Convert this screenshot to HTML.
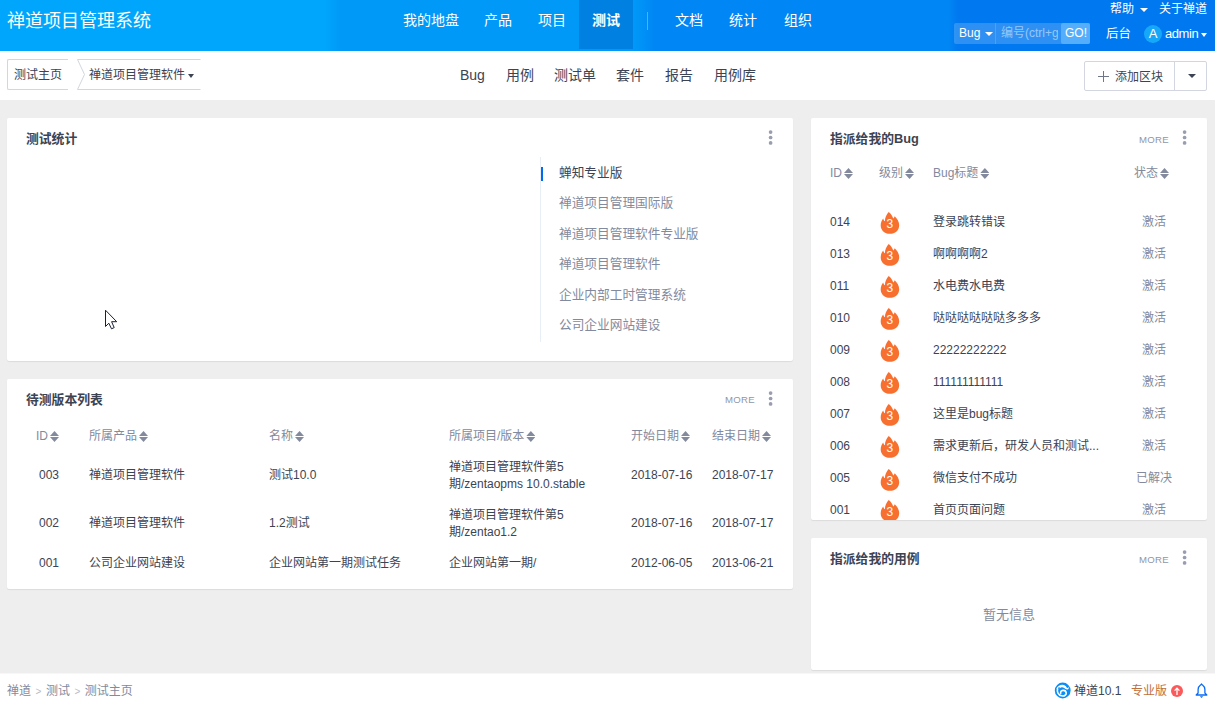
<!DOCTYPE html>
<html lang="zh-CN">
<head>
<meta charset="utf-8">
<title>测试主页 - 禅道项目管理系统</title>
<style>
*{box-sizing:border-box;margin:0;padding:0}
html,body{width:1215px;height:702px;overflow:hidden}
body{position:relative;background:#eeeeee;font-family:"Liberation Sans","Noto Sans CJK SC",sans-serif;font-size:12px;color:#3c4353;line-height:1}
.abs{position:absolute;white-space:nowrap}
#header{position:absolute;left:0;top:0;width:1215px;height:51px;background:linear-gradient(90deg,#00a6fb 0,#00a6fb 325px,#0099f8 340px,#0099f8 634px,#0087f5 654px,#0087f5 948px,#0078f0 958px,#0078f0 100%)}
#header .t{position:absolute;white-space:nowrap;color:#fff}
#title{left:7px;top:11px;font-size:18px;line-height:20px}
.nav{font-size:14px;line-height:20px;top:10px}
#act{position:absolute;left:579px;top:0;width:54px;height:49px;background:rgba(0,60,160,.25)}
#divd{position:absolute;left:647px;top:12px;width:1px;height:18px;background:rgba(255,255,255,.32)}
.sm{font-size:12px;line-height:16px}
.caret{display:inline-block;width:0;height:0;border-left:4px solid transparent;border-right:4px solid transparent;border-top:4px solid currentColor;vertical-align:middle}
#subbar{position:absolute;left:0;top:51px;width:1215px;height:49px;background:#fff}
.sub{font-size:14px;line-height:20px;top:65px;color:#3c4353}
.panel{position:absolute;background:#fff;border-radius:2px;box-shadow:0 1px 1px rgba(0,0,0,.08)}
.ptitle{font-weight:bold;font-size:12.8px;line-height:18px;color:#3c4353}
.more{font-size:9.600px;line-height:12px;color:#9096a8;letter-spacing:.25px}
.kebab{position:absolute;width:4px}
.kebab i{display:block;width:3.700px;height:3.700px;border-radius:50%;background:#989db0;margin-bottom:1.750px}
.th{color:#838a9d;font-size:12px;line-height:16px}
.td{color:#3c4353;font-size:12px;line-height:16px}
.sort{display:inline-block;position:relative;width:9px;height:11px;margin-left:2px;vertical-align:-2px}
.sort:before,.sort:after{content:"";position:absolute;left:0;width:9px;height:5px;background:#838a9d}
.sort:before{top:0;clip-path:polygon(50% 0,100% 100%,0 100%)}
.sort:after{top:6px;clip-path:polygon(0 0,100% 0,50% 100%)}
.li{font-size:12.7px;line-height:18px;color:#838a9d}
#footer{position:absolute;left:0;top:673px;width:1215px;height:29px;background:#fff;border-top:1px solid #f3f8fc}
</style>
</head>
<body>
<div id="header">
  <div class="t" id="title">禅道项目管理系统</div>
  <div id="act"></div>
  <div class="t nav" style="left:403px">我的地盘</div>
  <div class="t nav" style="left:484px">产品</div>
  <div class="t nav" style="left:538px">项目</div>
  <div class="t nav" style="left:592px;font-weight:bold">测试</div>
  <div id="divd"></div>
  <div class="t nav" style="left:675px">文档</div>
  <div class="t nav" style="left:729px">统计</div>
  <div class="t nav" style="left:784px">组织</div>
  <div class="t sm" style="left:1110px;top:1px;line-height:16px">帮助 <span class="caret" style="margin-left:3px"></span></div>
  <div class="t sm" style="left:1159px;top:1px;line-height:16px">关于禅道</div>
  <div style="position:absolute;left:954px;top:23px;width:136px;height:21px;border-radius:2px;background:rgba(255,255,255,.18)"></div>
  <div style="position:absolute;left:995px;top:23px;width:1px;height:21px;background:rgba(255,255,255,.15)"></div>
  <div style="position:absolute;left:1061px;top:23px;width:29px;height:21px;border-radius:2px;background:#55aefc"></div>
  <div class="t sm" style="left:959px;top:25px">Bug <span class="caret" style="margin-left:1px"></span></div>
  <div class="t sm" style="left:1001px;top:25px;color:rgba(255,255,255,.5);width:57px;overflow:hidden">编号(ctrl+g)</div>
  <div class="t sm" style="left:1065px;top:25px">GO!</div>
  <div class="t" style="left:1106px;top:25px;font-size:12.500px;line-height:18px">后台</div>
  <div style="position:absolute;left:1144px;top:25px;width:18px;height:18px;border-radius:50%;background:#16a8f8"></div>
  <div class="t" style="left:1144px;top:25px;width:18px;text-align:center;font-size:13px;line-height:18px">A</div>
  <div class="t" style="left:1165px;top:25px;font-size:13px;line-height:18px;letter-spacing:-.45px">admin<span class="caret" style="margin-left:3px;border-left-width:3px;border-right-width:3px"></span></div>
</div>
<div id="subbar"></div>
<div style="position:absolute;left:7px;top:59px;width:61px;height:31px;border:1px solid #d3d6e1;border-right:0;border-radius:2px 0 0 2px"></div>
<div class="abs" style="left:14px;top:67px;font-size:12px;line-height:16px">测试主页</div>
<svg style="position:absolute;left:76px;top:59px" width="126" height="31" viewBox="0 0 126 31"><path d="M124.500 0.500H1.500L8.500 15.500L1.500 30.500H124.500" fill="none" stroke="#d3d6e1" stroke-width="1"/></svg>
<div class="abs" style="left:89px;top:67px;font-size:12px;line-height:16px">禅道项目管理软件 <span class="caret" style="border-left-width:3.500px;border-right-width:3.500px;border-top-width:4px;margin-left:0px"></span></div>
<div class="abs sub" style="left:460px">Bug</div>
<div class="abs sub" style="left:506px">用例</div>
<div class="abs sub" style="left:554px">测试单</div>
<div class="abs sub" style="left:616px">套件</div>
<div class="abs sub" style="left:665px">报告</div>
<div class="abs sub" style="left:714px">用例库</div>
<div style="position:absolute;left:1084px;top:61px;width:123px;height:30px;border:1px solid #d3d6e1;border-radius:2px"></div>
<div style="position:absolute;left:1174px;top:61px;width:1px;height:30px;background:#d3d6e1"></div>
<svg style="position:absolute;left:1098px;top:71px" width="11" height="11" viewBox="0 0 11 11"><path d="M5.500 0V11M0 5.500H11" stroke="#70768a" stroke-width="1" fill="none"/></svg>
<div class="abs" style="left:1115px;top:69px;font-size:12px;line-height:16px">添加区块</div>
<div class="abs" style="left:1188px;top:74px;width:0;height:0;border-left:4px solid transparent;border-right:4px solid transparent;border-top:4px solid #3c4353"></div>
<div class="panel" style="left:7px;top:118px;width:786px;height:243px"></div>
<div class="abs ptitle" style="left:26px;top:130px">测试统计</div>
<svg style="position:absolute;left:767px;top:130px" width="9" height="17" viewBox="0 0 9 17"><circle cx="3.60" cy="2.05" r="1.850" fill="#989db0"/><circle cx="3.60" cy="7.50" r="1.850" fill="#989db0"/><circle cx="3.60" cy="12.95" r="1.850" fill="#989db0"/></svg>
<div style="position:absolute;left:540px;top:157px;width:1px;height:185px;background:#e8eef6"></div>
<div style="position:absolute;left:541px;top:167px;width:2px;height:14px;background:#006af1"></div>
<div class="abs li" style="left:559px;top:164px;color:#3c4353">蝉知专业版</div>
<div class="abs li" style="left:559px;top:194px">禅道项目管理国际版</div>
<div class="abs li" style="left:559px;top:225px">禅道项目管理软件专业版</div>
<div class="abs li" style="left:559px;top:255px">禅道项目管理软件</div>
<div class="abs li" style="left:559px;top:286px">企业内部工时管理系统</div>
<div class="abs li" style="left:559px;top:316px">公司企业网站建设</div>
<svg style="position:absolute;left:104px;top:309px" width="15" height="22" viewBox="0 0 15 22"><path d="M1.500 1.200V17.500L4.800 14.200L7.500 19.800L10.200 18.600L7.600 12.700H12.700Z" fill="#fff" stroke="#1a1f36" stroke-width="1" stroke-linejoin="miter"/></svg>
<div class="panel" style="left:7px;top:379px;width:786px;height:210px"></div>
<div class="abs ptitle" style="left:26px;top:391px">待测版本列表</div>
<div class="abs more" style="left:725px;top:394px">MORE</div>
<svg style="position:absolute;left:767px;top:391px" width="9" height="17" viewBox="0 0 9 17"><circle cx="3.60" cy="2.05" r="1.850" fill="#989db0"/><circle cx="3.60" cy="7.50" r="1.850" fill="#989db0"/><circle cx="3.60" cy="12.95" r="1.850" fill="#989db0"/></svg>
<div class="abs th" style="left:36px;top:428px">ID<span class="sort"></span></div>
<div class="abs th" style="left:89px;top:428px">所属产品<span class="sort"></span></div>
<div class="abs th" style="left:269px;top:428px">名称<span class="sort"></span></div>
<div class="abs th" style="left:449px;top:428px">所属项目/版本<span class="sort"></span></div>
<div class="abs th" style="left:631px;top:428px">开始日期<span class="sort"></span></div>
<div class="abs th" style="left:712px;top:428px">结束日期<span class="sort"></span></div>

<div class="abs td" style="left:39px;top:467px">003</div>
<div class="abs td" style="left:89px;top:467px">禅道项目管理软件</div>
<div class="abs td" style="left:269px;top:467px">测试10.0</div>
<div class="abs td" style="left:449px;top:459px;line-height:17px">禅道项目管理软件第5<br>期/zentaopms 10.0.stable</div>
<div class="abs td" style="left:631px;top:467px">2018-07-16</div>
<div class="abs td" style="left:712px;top:467px">2018-07-17</div>

<div class="abs td" style="left:39px;top:515px">002</div>
<div class="abs td" style="left:89px;top:515px">禅道项目管理软件</div>
<div class="abs td" style="left:269px;top:515px">1.2测试</div>
<div class="abs td" style="left:449px;top:507px;line-height:17px">禅道项目管理软件第5<br>期/zentao1.2</div>
<div class="abs td" style="left:631px;top:515px">2018-07-16</div>
<div class="abs td" style="left:712px;top:515px">2018-07-17</div>

<div class="abs td" style="left:39px;top:555px">001</div>
<div class="abs td" style="left:89px;top:555px">公司企业网站建设</div>
<div class="abs td" style="left:269px;top:555px">企业网站第一期测试任务</div>
<div class="abs td" style="left:449px;top:555px">企业网站第一期/</div>
<div class="abs td" style="left:631px;top:555px">2012-06-05</div>
<div class="abs td" style="left:712px;top:555px">2013-06-21</div>
<div class="panel" style="left:811px;top:118px;width:396px;height:402px"></div>
<div style="position:absolute;left:811px;top:118px;width:396px;height:402px;overflow:hidden">
<div style="position:absolute;left:-811px;top:-118px;width:1215px;height:702px">
<div class="abs ptitle" style="left:830px;top:130px">指派给我的Bug</div>
<div class="abs more" style="left:1139px;top:134px">MORE</div>
<svg style="position:absolute;left:1181px;top:130px" width="9" height="17" viewBox="0 0 9 17"><circle cx="3.60" cy="2.05" r="1.850" fill="#989db0"/><circle cx="3.60" cy="7.50" r="1.850" fill="#989db0"/><circle cx="3.60" cy="12.95" r="1.850" fill="#989db0"/></svg>
<div class="abs th" style="left:830px;top:165px">ID<span class="sort"></span></div>
<div class="abs th" style="left:879px;top:165px">级别<span class="sort"></span></div>
<div class="abs th" style="left:933px;top:165px">Bug标题<span class="sort"></span></div>
<div class="abs th" style="left:1134px;top:165px">状态<span class="sort"></span></div>
<div class="abs td" style="left:830px;top:214px">014</div>
<svg style="position:absolute;left:880px;top:212px" width="20" height="22" viewBox="0 0 20 22"><path d="M8.700 0C10.800 1.600 12.600 4 13.200 6.600C13.900 6 14.400 5.300 14.700 4.300C17.200 6.600 19.200 9.800 19.200 13.200C19.200 18.200 15.200 21.800 9.900 21.800C4.600 21.800 0.700 18.200 0.700 13.400C0.700 10.800 1.600 8.400 3.200 6.500C3.400 7.600 3.900 8.500 4.900 9.200C5 5.600 6.400 2.400 8.700 0Z" fill="#f8702f"/><text x="9.800" y="16.300" text-anchor="middle" font-family="Liberation Sans, sans-serif" font-size="12" fill="#fff">3</text></svg>
<div class="abs td" style="left:933px;top:214px">登录跳转错误</div>
<div class="abs td" style="left:1124px;top:214px;width:60px;text-align:center;color:#838a9d">激活</div>
<div class="abs td" style="left:830px;top:246px">013</div>
<svg style="position:absolute;left:880px;top:244px" width="20" height="22" viewBox="0 0 20 22"><path d="M8.700 0C10.800 1.600 12.600 4 13.200 6.600C13.900 6 14.400 5.300 14.700 4.300C17.200 6.600 19.200 9.800 19.200 13.200C19.200 18.200 15.200 21.800 9.900 21.800C4.600 21.800 0.700 18.200 0.700 13.400C0.700 10.800 1.600 8.400 3.200 6.500C3.400 7.600 3.900 8.500 4.900 9.200C5 5.600 6.400 2.400 8.700 0Z" fill="#f8702f"/><text x="9.800" y="16.300" text-anchor="middle" font-family="Liberation Sans, sans-serif" font-size="12" fill="#fff">3</text></svg>
<div class="abs td" style="left:933px;top:246px">啊啊啊啊2</div>
<div class="abs td" style="left:1124px;top:246px;width:60px;text-align:center;color:#838a9d">激活</div>
<div class="abs td" style="left:830px;top:278px">011</div>
<svg style="position:absolute;left:880px;top:276px" width="20" height="22" viewBox="0 0 20 22"><path d="M8.700 0C10.800 1.600 12.600 4 13.200 6.600C13.900 6 14.400 5.300 14.700 4.300C17.200 6.600 19.200 9.800 19.200 13.200C19.200 18.200 15.200 21.800 9.900 21.800C4.600 21.800 0.700 18.200 0.700 13.400C0.700 10.800 1.600 8.400 3.200 6.500C3.400 7.600 3.900 8.500 4.900 9.200C5 5.600 6.400 2.400 8.700 0Z" fill="#f8702f"/><text x="9.800" y="16.300" text-anchor="middle" font-family="Liberation Sans, sans-serif" font-size="12" fill="#fff">3</text></svg>
<div class="abs td" style="left:933px;top:278px">水电费水电费</div>
<div class="abs td" style="left:1124px;top:278px;width:60px;text-align:center;color:#838a9d">激活</div>
<div class="abs td" style="left:830px;top:310px">010</div>
<svg style="position:absolute;left:880px;top:308px" width="20" height="22" viewBox="0 0 20 22"><path d="M8.700 0C10.800 1.600 12.600 4 13.200 6.600C13.900 6 14.400 5.300 14.700 4.300C17.200 6.600 19.200 9.800 19.200 13.200C19.200 18.200 15.200 21.800 9.900 21.800C4.600 21.800 0.700 18.200 0.700 13.400C0.700 10.800 1.600 8.400 3.200 6.500C3.400 7.600 3.900 8.500 4.900 9.200C5 5.600 6.400 2.400 8.700 0Z" fill="#f8702f"/><text x="9.800" y="16.300" text-anchor="middle" font-family="Liberation Sans, sans-serif" font-size="12" fill="#fff">3</text></svg>
<div class="abs td" style="left:933px;top:310px">哒哒哒哒哒哒多多多</div>
<div class="abs td" style="left:1124px;top:310px;width:60px;text-align:center;color:#838a9d">激活</div>
<div class="abs td" style="left:830px;top:342px">009</div>
<svg style="position:absolute;left:880px;top:340px" width="20" height="22" viewBox="0 0 20 22"><path d="M8.700 0C10.800 1.600 12.600 4 13.200 6.600C13.900 6 14.400 5.300 14.700 4.300C17.200 6.600 19.200 9.800 19.200 13.200C19.200 18.200 15.200 21.800 9.900 21.800C4.600 21.800 0.700 18.200 0.700 13.400C0.700 10.800 1.600 8.400 3.200 6.500C3.400 7.600 3.900 8.500 4.900 9.200C5 5.600 6.400 2.400 8.700 0Z" fill="#f8702f"/><text x="9.800" y="16.300" text-anchor="middle" font-family="Liberation Sans, sans-serif" font-size="12" fill="#fff">3</text></svg>
<div class="abs td" style="left:933px;top:342px">22222222222</div>
<div class="abs td" style="left:1124px;top:342px;width:60px;text-align:center;color:#838a9d">激活</div>
<div class="abs td" style="left:830px;top:374px">008</div>
<svg style="position:absolute;left:880px;top:372px" width="20" height="22" viewBox="0 0 20 22"><path d="M8.700 0C10.800 1.600 12.600 4 13.200 6.600C13.900 6 14.400 5.300 14.700 4.300C17.200 6.600 19.200 9.800 19.200 13.200C19.200 18.200 15.200 21.800 9.900 21.800C4.600 21.800 0.700 18.200 0.700 13.400C0.700 10.800 1.600 8.400 3.200 6.500C3.400 7.600 3.900 8.500 4.900 9.200C5 5.600 6.400 2.400 8.700 0Z" fill="#f8702f"/><text x="9.800" y="16.300" text-anchor="middle" font-family="Liberation Sans, sans-serif" font-size="12" fill="#fff">3</text></svg>
<div class="abs td" style="left:933px;top:374px">111111111111</div>
<div class="abs td" style="left:1124px;top:374px;width:60px;text-align:center;color:#838a9d">激活</div>
<div class="abs td" style="left:830px;top:406px">007</div>
<svg style="position:absolute;left:880px;top:404px" width="20" height="22" viewBox="0 0 20 22"><path d="M8.700 0C10.800 1.600 12.600 4 13.200 6.600C13.900 6 14.400 5.300 14.700 4.300C17.200 6.600 19.200 9.800 19.200 13.200C19.200 18.200 15.200 21.800 9.900 21.800C4.600 21.800 0.700 18.200 0.700 13.400C0.700 10.800 1.600 8.400 3.200 6.500C3.400 7.600 3.900 8.500 4.900 9.200C5 5.600 6.400 2.400 8.700 0Z" fill="#f8702f"/><text x="9.800" y="16.300" text-anchor="middle" font-family="Liberation Sans, sans-serif" font-size="12" fill="#fff">3</text></svg>
<div class="abs td" style="left:933px;top:406px">这里是bug标题</div>
<div class="abs td" style="left:1124px;top:406px;width:60px;text-align:center;color:#838a9d">激活</div>
<div class="abs td" style="left:830px;top:438px">006</div>
<svg style="position:absolute;left:880px;top:436px" width="20" height="22" viewBox="0 0 20 22"><path d="M8.700 0C10.800 1.600 12.600 4 13.200 6.600C13.900 6 14.400 5.300 14.700 4.300C17.200 6.600 19.200 9.800 19.200 13.200C19.200 18.200 15.200 21.800 9.900 21.800C4.600 21.800 0.700 18.200 0.700 13.400C0.700 10.800 1.600 8.400 3.200 6.500C3.400 7.600 3.900 8.500 4.900 9.200C5 5.600 6.400 2.400 8.700 0Z" fill="#f8702f"/><text x="9.800" y="16.300" text-anchor="middle" font-family="Liberation Sans, sans-serif" font-size="12" fill="#fff">3</text></svg>
<div class="abs td" style="left:933px;top:438px">需求更新后，研发人员和测试...</div>
<div class="abs td" style="left:1124px;top:438px;width:60px;text-align:center;color:#838a9d">激活</div>
<div class="abs td" style="left:830px;top:470px">005</div>
<svg style="position:absolute;left:880px;top:469px" width="20" height="22" viewBox="0 0 20 22"><path d="M8.700 0C10.800 1.600 12.600 4 13.200 6.600C13.900 6 14.400 5.300 14.700 4.300C17.200 6.600 19.200 9.800 19.200 13.200C19.200 18.200 15.200 21.800 9.900 21.800C4.600 21.800 0.700 18.200 0.700 13.400C0.700 10.800 1.600 8.400 3.200 6.500C3.400 7.600 3.900 8.500 4.900 9.200C5 5.600 6.400 2.400 8.700 0Z" fill="#f8702f"/><text x="9.800" y="16.300" text-anchor="middle" font-family="Liberation Sans, sans-serif" font-size="12" fill="#fff">3</text></svg>
<div class="abs td" style="left:933px;top:470px">微信支付不成功</div>
<div class="abs td" style="left:1124px;top:470px;width:60px;text-align:center;color:#838a9d">已解决</div>
<div class="abs td" style="left:830px;top:502px">001</div>
<svg style="position:absolute;left:880px;top:500px" width="20" height="22" viewBox="0 0 20 22"><path d="M8.700 0C10.800 1.600 12.600 4 13.200 6.600C13.900 6 14.400 5.300 14.700 4.300C17.200 6.600 19.200 9.800 19.200 13.200C19.200 18.200 15.200 21.800 9.900 21.800C4.600 21.800 0.700 18.200 0.700 13.400C0.700 10.800 1.600 8.400 3.200 6.500C3.400 7.600 3.900 8.500 4.900 9.200C5 5.600 6.400 2.400 8.700 0Z" fill="#f8702f"/><text x="9.800" y="16.300" text-anchor="middle" font-family="Liberation Sans, sans-serif" font-size="12" fill="#fff">3</text></svg>
<div class="abs td" style="left:933px;top:502px">首页页面问题</div>
<div class="abs td" style="left:1124px;top:502px;width:60px;text-align:center;color:#838a9d">激活</div>
</div></div>
<div class="panel" style="left:811px;top:538px;width:396px;height:132px"></div>
<div class="abs ptitle" style="left:830px;top:550px">指派给我的用例</div>
<div class="abs more" style="left:1139px;top:554px">MORE</div>
<svg style="position:absolute;left:1181px;top:550px" width="9" height="17" viewBox="0 0 9 17"><circle cx="3.60" cy="2.05" r="1.850" fill="#989db0"/><circle cx="3.60" cy="7.50" r="1.850" fill="#989db0"/><circle cx="3.60" cy="12.95" r="1.850" fill="#989db0"/></svg>
<div class="abs" style="left:811px;top:606px;width:396px;text-align:center;font-size:13px;line-height:18px;color:#838a9d">暂无信息</div>
<div id="footer"></div>
<div class="abs" style="left:7px;top:683px;font-size:12px;line-height:16px;color:#838a9d">禅道 <span style="font-size:10px;color:#b8bcc8;margin:0 1.200px">&gt;</span> 测试 <span style="font-size:10px;color:#b8bcc8;margin:0 1.200px">&gt;</span> 测试主页</div>
<svg style="position:absolute;left:1054px;top:682px" width="18" height="18" viewBox="0 0 18 18"><g transform="translate(0.700 0.500)"><circle cx="8" cy="8" r="7.900" fill="#0a8ef5"/><path d="M1.700 6.600C2.400 4.200 4.800 2.300 7.700 2.300C9.700 2.300 10.900 3.500 12 4.900C12.700 5.800 13.500 5.600 13.900 4.300C14.400 6.200 13.700 7.100 12.400 7.100C11 7.100 10.200 6 9.200 5.300C7.800 4.400 6 4.600 5 5.900C5.100 5.100 4.800 4.600 4.200 4.300C3.600 5.400 3.300 6.200 3 7.400Z" fill="#fff"/><path d="M2.900 6.400C2 9 3.400 12.500 7 13.300C9.900 13.900 11.800 12.200 11.500 10.300C11.200 8.600 9.600 7.700 8.100 7.900C6.500 8.100 5.700 9.300 6 10.600" fill="none" stroke="#fff" stroke-width="1.600" stroke-linecap="round"/></g></svg>
<div class="abs" style="left:1074px;top:683px;font-size:12px;line-height:16px;color:#3c4353">禅道10.1</div>
<div class="abs" style="left:1131px;top:683px;font-size:12px;line-height:16px;color:#c0703a">专业版</div>
<svg style="position:absolute;left:1171px;top:685px" width="12" height="12" viewBox="0 0 12 12"><circle cx="6" cy="6" r="6" fill="#fc5a5a"/><path d="M6 10V3.500M3.600 5.600L6 3.100L8.400 5.600" fill="none" stroke="#fff" stroke-width="1.300"/></svg>
<svg style="position:absolute;left:1195px;top:683px" width="13" height="16" viewBox="0 0 13 16"><path d="M6.500 1C6.500 1.800 3.100 2.600 3.100 6.500V10L1.200 12H11.800L9.900 10V6.500C9.900 2.600 6.500 1.800 6.500 1Z" fill="none" stroke="#0a6cf5" stroke-width="1.300" stroke-linejoin="round"/><path d="M4.800 13.200H8.200L6.500 15Z" fill="#0a6cf5"/></svg>

</body>
</html>
